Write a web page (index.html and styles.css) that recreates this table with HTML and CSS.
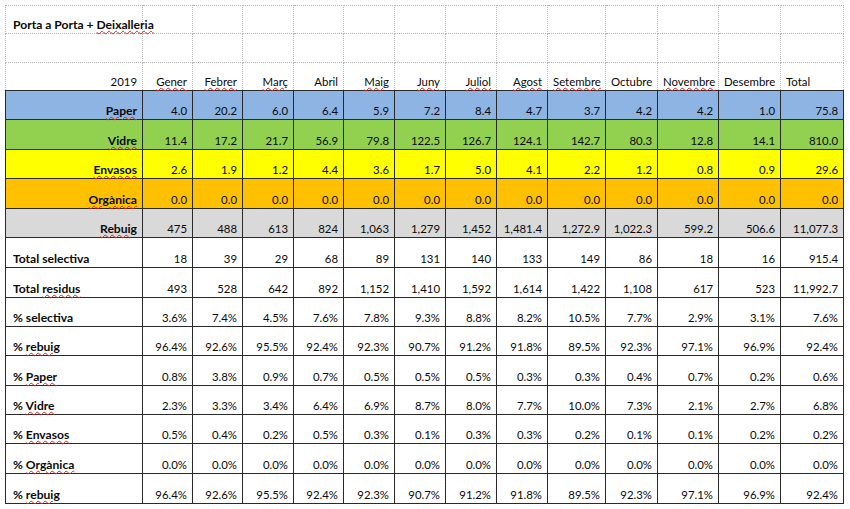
FILE: index.html
```html
<!DOCTYPE html>
<html lang="ca">
<head>
<meta charset="utf-8">
<title>Porta a Porta + Deixalleria</title>
<link rel="stylesheet" href="styles.css">
</head>
<body>
<div class="sheet">
<table class="grid">
  <colgroup>
    <col class="c-label">
    <col class="c-50"><col class="c-50"><col class="c-51"><col class="c-50"><col class="c-51"><col class="c-51"><col class="c-51"><col class="c-51">
    <col class="c-58"><col class="c-52"><col class="c-61"><col class="c-62"><col class="c-63">
  </colgroup>
  <tbody>
    <tr class="blank h28"><td class="title">Porta a Porta + <span class="sp">Deixalleria</span></td><td></td><td></td><td></td><td></td><td></td><td></td><td></td><td></td><td></td><td></td><td></td><td></td><td></td></tr>
    <tr class="blank h29"><td></td><td></td><td></td><td></td><td></td><td></td><td></td><td></td><td></td><td></td><td></td><td></td><td></td><td></td></tr>
    <tr class="blank head h28"><td>2019</td><td><span class="sp">Gener</span></td><td><span class="sp">Febrer</span></td><td><span class="sp">Març</span></td><td>Abril</td><td><span class="sp">Maig</span></td><td><span class="sp">Juny</span></td><td><span class="sp">Juliol</span></td><td><span class="sp">Agost</span></td><td><span class="sp">Setembre</span></td><td>Octubre</td><td><span class="sp">Novembre</span></td><td>Desembre</td><td class="left">Total</td></tr>
    <tr class="data paper h29"><th><span class="sp">Paper</span></th><td>4.0</td><td>20.2</td><td>6.0</td><td>6.4</td><td>5.9</td><td>7.2</td><td>8.4</td><td>4.7</td><td>3.7</td><td>4.2</td><td>4.2</td><td>1.0</td><td>75.8</td></tr>
    <tr class="data vidre h30"><th><span class="sp">Vidre</span></th><td>11.4</td><td>17.2</td><td>21.7</td><td>56.9</td><td>79.8</td><td>122.5</td><td>126.7</td><td>124.1</td><td>142.7</td><td>80.3</td><td>12.8</td><td>14.1</td><td>810.0</td></tr>
    <tr class="data envasos h29"><th><span class="sp">Envasos</span></th><td>2.6</td><td>1.9</td><td>1.2</td><td>4.4</td><td>3.6</td><td>1.7</td><td>5.0</td><td>4.1</td><td>2.2</td><td>1.2</td><td>0.8</td><td>0.9</td><td>29.6</td></tr>
    <tr class="data organica h30"><th><span class="sp">Orgànica</span></th><td>0.0</td><td>0.0</td><td>0.0</td><td>0.0</td><td>0.0</td><td>0.0</td><td>0.0</td><td>0.0</td><td>0.0</td><td>0.0</td><td>0.0</td><td>0.0</td><td>0.0</td></tr>
    <tr class="data rebuig h29"><th><span class="sp">Rebuig</span></th><td>475</td><td>488</td><td>613</td><td>824</td><td>1,063</td><td>1,279</td><td>1,452</td><td>1,481.4</td><td>1,272.9</td><td>1,022.3</td><td>599.2</td><td>506.6</td><td>11,077.3</td></tr>
    <tr class="data sum h30"><th>Total selectiva</th><td>18</td><td>39</td><td>29</td><td>68</td><td>89</td><td>131</td><td>140</td><td>133</td><td>149</td><td>86</td><td>18</td><td>16</td><td>915.4</td></tr>
    <tr class="data sum h30"><th>Total <span class="sp">residus</span></th><td>493</td><td>528</td><td>642</td><td>892</td><td>1,152</td><td>1,410</td><td>1,592</td><td>1,614</td><td>1,422</td><td>1,108</td><td>617</td><td>523</td><td>11,992.7</td></tr>
    <tr class="data sum h29"><th>% selectiva</th><td>3.6%</td><td>7.4%</td><td>4.5%</td><td>7.6%</td><td>7.8%</td><td>9.3%</td><td>8.8%</td><td>8.2%</td><td>10.5%</td><td>7.7%</td><td>2.9%</td><td>3.1%</td><td>7.6%</td></tr>
    <tr class="data sum h29"><th>% <span class="sp">rebuig</span></th><td>96.4%</td><td>92.6%</td><td>95.5%</td><td>92.4%</td><td>92.3%</td><td>90.7%</td><td>91.2%</td><td>91.8%</td><td>89.5%</td><td>92.3%</td><td>97.1%</td><td>96.9%</td><td>92.4%</td></tr>
    <tr class="data sum h30"><th>% <span class="sp">Paper</span></th><td>0.8%</td><td>3.8%</td><td>0.9%</td><td>0.7%</td><td>0.5%</td><td>0.5%</td><td>0.5%</td><td>0.3%</td><td>0.3%</td><td>0.4%</td><td>0.7%</td><td>0.2%</td><td>0.6%</td></tr>
    <tr class="data sum h29"><th>% <span class="sp">Vidre</span></th><td>2.3%</td><td>3.3%</td><td>3.4%</td><td>6.4%</td><td>6.9%</td><td>8.7%</td><td>8.0%</td><td>7.7%</td><td>10.0%</td><td>7.3%</td><td>2.1%</td><td>2.7%</td><td>6.8%</td></tr>
    <tr class="data sum h29"><th>% <span class="sp">Envasos</span></th><td>0.5%</td><td>0.4%</td><td>0.2%</td><td>0.5%</td><td>0.3%</td><td>0.1%</td><td>0.3%</td><td>0.3%</td><td>0.2%</td><td>0.1%</td><td>0.1%</td><td>0.2%</td><td>0.2%</td></tr>
    <tr class="data sum h30"><th>% <span class="sp">Orgànica</span></th><td>0.0%</td><td>0.0%</td><td>0.0%</td><td>0.0%</td><td>0.0%</td><td>0.0%</td><td>0.0%</td><td>0.0%</td><td>0.0%</td><td>0.0%</td><td>0.0%</td><td>0.0%</td><td>0.0%</td></tr>
    <tr class="data sum h30"><th>% <span class="sp">rebuig</span></th><td>96.4%</td><td>92.6%</td><td>95.5%</td><td>92.4%</td><td>92.3%</td><td>90.7%</td><td>91.2%</td><td>91.8%</td><td>89.5%</td><td>92.3%</td><td>97.1%</td><td>96.9%</td><td>92.4%</td></tr>
  </tbody>
</table>
</div>
</body>
</html>
```
FILE: styles.css
```css
html, body {
  margin: 0;
  padding: 0;
  background: #ffffff;
}

.sheet {
  padding: 5px 0 0 5px;
  font-family: Lato, "Open Sans", sans-serif;
  font-size: 11.4px;
  color: #0a0a0a;
}

.grid {
  border-collapse: collapse;
  table-layout: fixed;
  width: 838px;
}

.c-label { width: 137px; }
.c-50 { width: 50px; }
.c-51 { width: 51px; }
.c-52 { width: 52px; }
.c-58 { width: 58px; }
.c-61 { width: 61px; }
.c-62 { width: 62px; }
.c-63 { width: 63px; }

.grid td,
.grid th {
  padding: 0 5px 2px 5px;
  line-height: 13px;
  vertical-align: bottom;
  text-align: right;
  white-space: nowrap;
  overflow: visible;
}

.h28 { height: 28px; }
.h29 { height: 29px; }
.h30 { height: 30px; }

/* gridline area at the top */
.blank td {
  border: 1px dotted #b4b4b4;
}
.blank td.title {
  text-align: left;
  font-weight: 700;
  font-size: 12.1px;
  padding-left: 7px;
  padding-bottom: 2px;
}
.head td {
  border-bottom: 1px solid #2a2a2a;
}
.head td.left {
  text-align: left;
}

/* bordered data area */
.data td,
.data th {
  border: 1px solid #2a2a2a;
}
.data th {
  font-weight: 700;
  font-size: 12.1px;
}
.sum th {
  text-align: left;
  padding-left: 7px;
}

.paper td, .paper th { background: #8db4e2; }
.vidre td, .vidre th { background: #92d050; }
.envasos td, .envasos th { background: #ffff00; }
.organica td, .organica th { background: #ffc000; }
.rebuig td, .rebuig th { background: #d9d9d9; }

/* spell-check squiggle */
.sp {
  text-decoration: underline wavy #e02020;
  text-decoration-thickness: 1px;
  text-underline-offset: 1px;
}
```
